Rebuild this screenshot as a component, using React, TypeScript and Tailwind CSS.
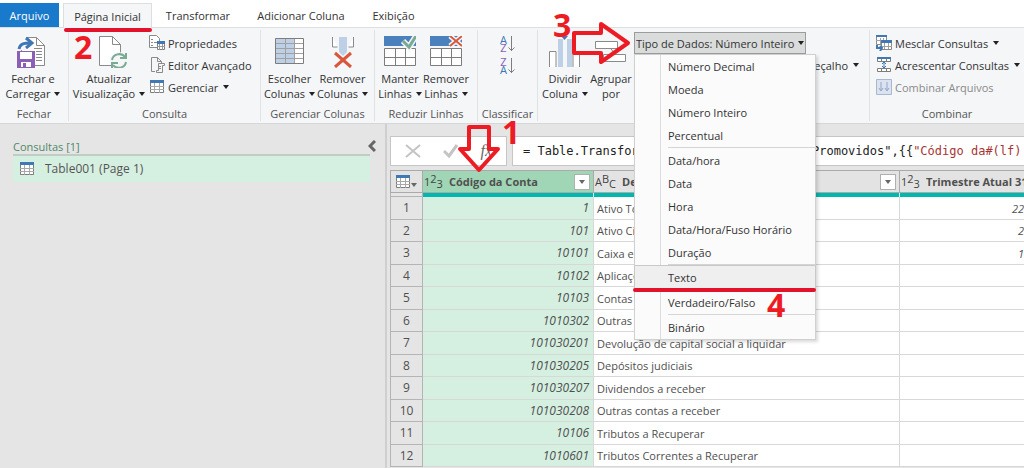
import type { ReactNode } from 'react'

function Caret({ className = 'fill-[#222]' }: { className?: string }) {
  return (
    <svg width="6" height="4" viewBox="0 0 6 4" className={`shrink-0 ${className}`} aria-hidden="true">
      <path d="M0 0h6L3 4z" />
    </svg>
  )
}

/* Icons */

function CloseLoadIcon() {
  return (
    <svg width="32" height="32" viewBox="0 0 32 32" fill="none" aria-hidden="true">
      <path d="M4.5 1.5h15l8 8v20h-23z" fill="#fff" stroke="#8a8a8a" />
      <path d="M19.5 1.5v8h8M17 12.5h8M19 15.5h6M19 18.5h6M19 21.5h6M19 24.500h6" stroke="#8a8a8a" />
      <path d="M0 0h9v14H0z" fill="#f4f6f8" />
      <path d="M2 13c1-5 4-6 12-6" stroke="#fff" strokeWidth="6" />
      <path d="M2 13c1-5 4-6 12-6" stroke="#3f78b5" strokeWidth="3" />
      <path d="M9 2l6 5-6 5" stroke="#3f78b5" strokeWidth="3" />
      <path d="M0 15h18v17H0z" fill="#8a5fb5" />
      <path d="M3 16h12v7H3z" fill="#fff" />
      <path d="M4 26h10v5H4z" fill="#fff" />
      <path d="M6 27h3v4H6z" fill="#8a5fb5" />
    </svg>
  )
}

function RefreshIcon() {
  return (
    <svg width="36" height="32" viewBox="0 0 36 32" fill="none" aria-hidden="true">
      <path d="M8.5.5h13l8 8v21h-21z" fill="#fff" stroke="#8a8a8a" />
      <path d="M21.5.5v8h8" stroke="#8a8a8a" />
      <circle cx="28" cy="25" r="9" fill="#f4f6f8" />
      <path d="M21 24c1-6 9-8 13-3M35 26c-1 6-9 8-13 3" stroke="#7aaa92" strokeWidth="2" />
      <path d="M35 17v5h-6M21 32v-5h6" stroke="#7aaa92" strokeWidth="2" />
    </svg>
  )
}

function ChooseColumnsIcon() {
  return (
    <svg width="32" height="32" viewBox="0 0 32 32" fill="none" aria-hidden="true">
      <path d="M2 2h28v26H2z" fill="#fff" />
      <path d="M2 2h19v26H2z" fill="#bdd0e6" />
      <path d="M2 7.5h28M2 12.5h28M2 17.5h28M2 22.5h28M11.5 2v26M20.5 2v26" stroke="#a0a0a0" />
      <path d="M1.5 2.5h28v25h-28z" stroke="#7d7d7d" />
    </svg>
  )
}

function RemoveColumnsIcon() {
  return (
    <svg width="32" height="32" viewBox="0 0 32 32" fill="none" aria-hidden="true">
      <path d="M5.5 1v10h5M26.5 1v10h-5" fill="#fff" stroke="#8a8a8a" />
      <path d="M12 1h8v15l-4 4-4-4z" fill="#bdd0e6" />
      <path d="M8 17l16 14M24 17L8 31" stroke="#d9573b" strokeWidth="3" />
    </svg>
  )
}

function RowsIcon({ children }: { children: ReactNode }) {
  return (
    <svg width="32" height="32" viewBox="0 0 32 32" fill="none" aria-hidden="true">
      <path d="M0 0h32v10H0z" fill="#4a80bb" />
      <path d="M.5 12.5h31v17H.5z" fill="#fff" stroke="#7d7d7d" />
      <path d="M11.5 12.5v17M21.5 12.5v17M.5 21.5h31" stroke="#7d7d7d" />
      {children}
    </svg>
  )
}

function KeepRowsIcon() {
  return (
    <RowsIcon>
      <path d="M19 5l6 6L32 0" stroke="#f4f6f8" strokeWidth="6" />
      <path d="M19 5l6 6L32 0" stroke="#7aaa92" strokeWidth="3" />
    </RowsIcon>
  )
}

function RemoveRowsIcon() {
  return (
    <RowsIcon>
      <path d="M20 0l12 10M32 0L20 10" stroke="#f4f6f8" strokeWidth="5" />
      <path d="M20 0l12 10M32 0L20 10" stroke="#d9573b" strokeWidth="2" />
    </RowsIcon>
  )
}

function SplitColumnIcon() {
  return (
    <svg width="32" height="32" viewBox="0 0 32 32" fill="none" aria-hidden="true">
      <path d="M.5 31V15.5H7V31M24 31V15.5h6.5V31" fill="#fff" stroke="#8a8a8a" />
      <path d="M9 3h5v28H9zM18 3h5v28h-5z" fill="#bdd0e6" />
      <path d="M12 0h7l-3.5 4z" fill="#3f78b5" />
    </svg>
  )
}

function GroupByIcon() {
  return (
    <svg width="32" height="32" viewBox="0 0 32 32" fill="none" aria-hidden="true">
      <path d="M.5 5.500h22v7H.5zM8.5 18.5h22v7h-22z" fill="#fff" stroke="#8a8a8a" />
      <path d="M16 13l4 5" stroke="#8a8a8a" />
    </svg>
  )
}

function SortIcon({ first, second }: { first: string; second: string }) {
  return (
    <span className="flex items-center">
      <span className="flex flex-col text-[11px] leading-[8px]">
        <span className={first === 'A' ? 'text-[#3f78b5]' : 'text-[#8a5fb5]'}>{first}</span>
        <span className={second === 'A' ? 'text-[#3f78b5]' : 'text-[#8a5fb5]'}>{second}</span>
      </span>
      <svg width="8" height="16" viewBox="0 0 8 16" fill="none" stroke="#7d7d7d" aria-hidden="true">
        <path d="M4.5 0v15M1.5 11.5l3 3 3-3" />
      </svg>
    </span>
  )
}

function PropertiesIcon() {
  return (
    <svg width="16" height="16" viewBox="0 0 16 16" fill="none" aria-hidden="true">
      <path d="M.5.5h7l3 3v9H.5z" fill="#fff" stroke="#8a8a8a" />
      <path d="M2 4.5h2M2 7.5h2M2 10.5h2M5 7.5h3" stroke="#8a8a8a" />
      <path d="M8.5 7.5h7v7h-7z" fill="#fff" stroke="#7d7d7d" />
      <path d="M8 6h8v3H8z" fill="#3f78b5" />
      <path d="M10.5 9v6M13.5 9v6M8 11.5h8" stroke="#9a9a9a" />
    </svg>
  )
}

function EditorIcon() {
  return (
    <svg width="16" height="16" viewBox="0 0 16 16" fill="none" aria-hidden="true">
      <path d="M6 14.5H2.5V.5h6l4 4V7" stroke="#8a8a8a" />
      <path d="M8.5.5v4h4" stroke="#8a8a8a" />
      <path d="M15.500 8.5v-2h-6v7h-2v2h6v-7h2M10 9.5h2M10 11.5h2" stroke="#8a8a8a" />
    </svg>
  )
}

function TableIcon() {
  return (
    <svg width="16" height="14" viewBox="0 0 16 14" fill="none" className="shrink-0" aria-hidden="true">
      <path d="M1.5 1.5h13v11h-13z" fill="#fff" stroke="#7d7d7d" />
      <path d="M5.5 3v10M10.5 3v10M1 6.5h14M1 9.5h14" stroke="#a8a8a8" />
      <path d="M1 0h14v3H1z" fill="#3f78b5" />
    </svg>
  )
}

function MergeIcon() {
  return (
    <svg width="16" height="16" viewBox="0 0 16 16" fill="none" aria-hidden="true">
      <path d="M.5 1.5h10v8H.5z" fill="#fff" stroke="#8a8a8a" />
      <path d="M4.5 3v6M7.5 3v6M0 5.5h11" stroke="#a0a0a0" />
      <path d="M0 0h11v2H0z" fill="#3f78b5" />
      <path d="M5.5 6.5h10v8h-10z" fill="#fff" stroke="#8a8a8a" />
      <path d="M8.5 8v6M12.5 8v6M5 11.5h11" stroke="#a0a0a0" />
      <path d="M5 5h11v3H5z" fill="#3f78b5" />
      <path d="M1 10v3h5M4 11l2 2-2 3" stroke="#3f78b5" strokeWidth="2" />
    </svg>
  )
}

function AppendIcon() {
  return (
    <svg width="16" height="16" viewBox="0 0 16 16" fill="none" aria-hidden="true">
      <path d="M1.5 1.5h13v3h-13zM1.5 11.5h13v3h-13z" fill="#fff" stroke="#7d7d7d" />
      <path d="M5.5 1v3M10.5 1v3M5.5 12v3M10.5 12v3" stroke="#7d7d7d" />
      <path d="M1 0h14v2H1z" fill="#3f78b5" />
      <path d="M8 5v6M6 7l2-2 2 2M6 9l2 2 2-2" stroke="#3f78b5" />
    </svg>
  )
}

function CombineFilesIcon() {
  return (
    <svg width="16" height="16" viewBox="0 0 16 16" fill="none" aria-hidden="true">
      <path d="M.5.5h15v15H.5z" fill="#dbe3f0" stroke="#a9b8d0" />
      <path d="M5 3v8M3 9l2 3 2-3M11 3v8M9 9l2 3 2-3" stroke="#93a5c4" />
    </svg>
  )
}

/* Ribbon */

interface BigButtonProps {
  icon: ReactNode
  lines: [string, string]
  menu?: boolean
  className: string
}

function BigButton({ icon, lines, menu = true, className }: BigButtonProps) {
  return (
    <button type="button" className={`flex flex-col items-center whitespace-nowrap pt-2 ${className}`}>
      {icon}
      <span className="mt-1 leading-[14px]">{lines[0]}</span>
      <span className="flex items-center gap-1 leading-[15px]">
        {lines[1]}
        {menu && <Caret />}
      </span>
    </button>
  )
}

interface SmallButtonProps {
  icon?: ReactNode
  label: string
  menu?: boolean
  disabled?: boolean
}

function SmallButton({ icon, label, menu, disabled }: SmallButtonProps) {
  return (
    <button
      type="button"
      disabled={disabled}
      className="flex h-[22px] items-center gap-[3px] whitespace-nowrap disabled:text-[#8a8a8a]"
    >
      {icon}
      {label}
      {menu && <Caret className="ml-0.5 fill-[#222]" />}
    </button>
  )
}

interface GroupProps {
  label?: string
  className: string
  children: ReactNode
}

function Group({ label, className, children }: GroupProps) {
  return (
    <section className={`flex shrink-0 flex-col ${className}`}>
      <div className="flex h-[78px] items-start">{children}</div>
      {label && <div className="text-center leading-[18px] text-[#555]">{label}</div>}
    </section>
  )
}

function Divider() {
  return <div className="my-0.5 w-px shrink-0 bg-[#e0e2e4]" />
}

const typeGroups = [
  ['Número Decimal', 'Moeda', 'Número Inteiro', 'Percentual'],
  ['Data/hora', 'Data', 'Hora', 'Data/Hora/Fuso Horário', 'Duração'],
  ['Texto'],
  ['Verdadeiro/Falso'],
  ['Binário'],
]

function TypeMenu() {
  return (
    <div
      role="menu"
      className="absolute left-0 top-full z-10 w-[182px] border border-[#d0d0d0] bg-[#fbfbfb] shadow-[2px_2px_3px_rgba(0,0,0,0.15)]"
    >
      <div className="absolute inset-y-0 left-[25px] w-px bg-[#dcdcdc]" />
      {typeGroups.map((items, i) => (
        <div key={items[0]} role="group" className="relative">
          {i > 0 && <div className="ml-[33px] h-0.5 border-t border-[#d5d5d5]" />}
          {items.map(item => (
            <button
              key={item}
              type="button"
              role="menuitem"
              className={[
                'block h-[23px] w-full pl-[33px] text-left text-[#333]',
                item === 'Texto' ? 'bg-[#efefef] outline outline-[#c8c8c8]' : '',
              ].join(' ')}
            >
              {item}
            </button>
          ))}
        </div>
      ))}
    </div>
  )
}

function Ribbon() {
  return (
    <div className="flex h-24 border-b border-[#d6d6d6] bg-[#f4f6f8]">
      <Group label="Fechar" className="w-[68px]">
        <BigButton icon={<CloseLoadIcon />} lines={['Fechar e', 'Carregar']} className="w-[66px]" />
      </Group>
      <Divider />
      <Group label="Consulta" className="w-[191px]">
        <BigButton icon={<RefreshIcon />} lines={['Atualizar', 'Visualização']} className="w-20" />
        <div className="pt-1">
          <SmallButton icon={<PropertiesIcon />} label="Propriedades" />
          <SmallButton icon={<EditorIcon />} label="Editor Avançado" />
          <SmallButton icon={<TableIcon />} label="Gerenciar" menu />
        </div>
      </Group>
      <Divider />
      <Group label="Gerenciar Colunas" className="w-[113px]">
        <BigButton icon={<ChooseColumnsIcon />} lines={['Escolher', 'Colunas']} className="ml-0.5 w-[53px]" />
        <BigButton icon={<RemoveColumnsIcon />} lines={['Remover', 'Colunas']} className="w-[53px]" />
      </Group>
      <Divider />
      <Group label="Reduzir Linhas" className="w-[102px]">
        <BigButton icon={<KeepRowsIcon />} lines={['Manter', 'Linhas']} className="ml-0.5 w-[46px]" />
        <BigButton icon={<RemoveRowsIcon />} lines={['Remover', 'Linhas']} className="w-[46px]" />
      </Group>
      <Divider />
      <Group label="Classificar" className="w-[59px]">
        <div className="flex w-full flex-col items-center gap-1.5 pt-2">
          <button type="button" aria-label="Classificar em ordem crescente">
            <SortIcon first="A" second="Z" />
          </button>
          <button type="button" aria-label="Classificar em ordem decrescente">
            <SortIcon first="Z" second="A" />
          </button>
        </div>
      </Group>
      <Divider />
      <Group className="w-[331px]">
        <BigButton icon={<SplitColumnIcon />} lines={['Dividir', 'Coluna']} className="ml-1 w-[46px]" />
        <BigButton icon={<GroupByIcon />} lines={['Agrupar', 'por']} menu={false} className="w-[46px]" />
        <div className="flex flex-col pt-1">
          <div className="relative">
            <button
              type="button"
              aria-haspopup="menu"
              aria-expanded="true"
              className="flex h-[22px] w-[172px] items-center justify-between whitespace-nowrap border border-[#9c9c9c] bg-[#d9dcdb] px-px"
            >
              Tipo de Dados: Número Inteiro
              <Caret />
            </button>
            <TypeMenu />
          </div>
          <div className="flex w-[225px] justify-end">
            <SmallButton label="Usar Cabeçalho" menu />
          </div>
        </div>
      </Group>
      <Divider />
      <Group label="Combinar" className="flex-1">
        <div className="pl-1.5 pt-1">
          <SmallButton icon={<MergeIcon />} label="Mesclar Consultas" menu />
          <SmallButton icon={<AppendIcon />} label="Acrescentar Consultas" menu />
          <SmallButton icon={<CombineFilesIcon />} label="Combinar Arquivos" disabled />
        </div>
      </Group>
    </div>
  )
}

function TabBar() {
  return (
    <nav className="flex h-7 whitespace-nowrap border-b border-[#dcdfe2] bg-white pt-[3px]">
      <button type="button" className="w-[59px] bg-[#1979ca] text-white">Arquivo</button>
      <button type="button" className="-mb-px ml-1 w-[89px] border-x border-t border-[#dcdfe2] bg-[#f4f6f8]">
        Página Inicial
      </button>
      <button type="button" className="w-[92px]">Transformar</button>
      <button type="button" className="w-[114px]">Adicionar Coluna</button>
      <button type="button" className="w-[71px]">Exibição</button>
    </nav>
  )
}

/* Queries and data */

function QueriesPane() {
  return (
    <aside className="w-[387px] shrink-0 border-r-2 border-[#cfcfcf] pl-[13px] pr-[15px] pt-3.5">
      <div className="flex h-4 items-center justify-between">
        <h2 className="text-[#4f8a68]">Consultas [1]</h2>
        <button type="button" aria-label="Recolher painel" className="-mr-1.5">
          <svg width="8" height="12" viewBox="0 0 8 12" fill="none" stroke="#666" strokeWidth="3" aria-hidden="true">
            <path d="M7 1L2 6l5 5" />
          </svg>
        </button>
      </div>
      <button
        type="button"
        className="flex h-[28px] w-full items-center gap-2.5 border-t-2 border-[#c2ccc6] bg-[#d5efe1] pl-1.5 text-xs text-[#555]"
      >
        <TableIcon />
        Table001 (Page 1)
      </button>
    </aside>
  )
}

function FormulaBar() {
  return (
    <div className="flex h-[30px] gap-[5px]">
      <div className="flex w-[117px] items-center justify-between border border-[#c6c6c6] bg-white px-3.5">
        <button type="button" aria-label="Cancelar">
          <svg width="16" height="14" viewBox="0 0 16 14" stroke="#c4c4c4" strokeWidth="2" aria-hidden="true">
            <path d="M1 1l14 12M15 1L1 13" />
          </svg>
        </button>
        <button type="button" aria-label="Confirmar">
          <svg width="16" height="14" viewBox="0 0 16 14" fill="none" stroke="#c4c4c4" strokeWidth="3" aria-hidden="true">
            <path d="M1 7l5 5L14 1" />
          </svg>
        </button>
        <button type="button" className="font-['Liberation_Serif',serif] text-base italic text-[#666]">fx</button>
      </div>
      <div
        role="textbox"
        aria-label="Fórmula"
        className="flex-1 overflow-hidden whitespace-pre border border-r-0 border-[#c6c6c6] bg-white pl-2.5 font-['DejaVu_Sans_Mono',monospace] text-xs leading-[28px] text-[#222]"
      >
        {'= Table.TransformColumnTypes(#"Registro Promovidos",{{'}
        <span className="text-[#a93434]">"Código da#(lf)</span>
      </div>
    </div>
  )
}

const rows = [
  ['1', 'Ativo Total', '22'],
  ['101', 'Ativo Circulante', '2'],
  ['10101', 'Caixa e Equivalentes', '1'],
  ['10102', 'Aplicações Financeiras', ''],
  ['10103', 'Contas a Receber', ''],
  ['1010302', 'Outras Contas', ''],
  ['101030201', 'Devolução de capital social a liquidar', ''],
  ['101030205', 'Depósitos judiciais', ''],
  ['101030207', 'Dividendos a receber', ''],
  ['101030208', 'Outras contas a receber', ''],
  ['10106', 'Tributos a Recuperar', ''],
  ['1010601', 'Tributos Correntes a Recuperar', ''],
]

/* Column type mark: three small characters, the second raised and the third lowered */
function TypeMark({ chars }: { chars: string }) {
  return (
    <span className="flex h-[17px] shrink-0 items-center text-[11px] leading-3 font-normal text-[#444]">
      <span>{chars[0]}</span>
      <span className="self-start">{chars[1]}</span>
      <span className="self-end">{chars[2]}</span>
    </span>
  )
}

function HeaderCell({ type, title, filter = true }: { type: string; title: string; filter?: boolean }) {
  return (
    <div className="flex h-[21px] items-center gap-1.5 whitespace-nowrap pl-px">
      <TypeMark chars={type} />
      <span className="flex-1">{title}</span>
      {filter && (
        <button
          type="button"
          aria-label={`Filtrar ${title}`}
          className="mr-[3px] flex size-4 shrink-0 items-center justify-center border border-[#b0b0b0] bg-white"
        >
          <Caret className="fill-[#666]" />
        </button>
      )}
    </div>
  )
}

function DataGrid() {
  return (
    <table className="mt-1 w-full table-fixed border-separate border-spacing-0 text-[#505050] [&_td]:p-0 [&_th]:p-0">
      <colgroup>
        <col className="w-[33px]" />
        <col className="w-[171px]" />
        <col className="w-[306px]" />
        <col />
      </colgroup>
      <thead className="text-left font-semibold">
        <tr className="[&>th]:border-y [&>th]:border-r [&>th]:border-[#aaa] [&>th]:bg-[#e3e3e3] [&>th:last-child]:border-r-0">
          <th scope="col" className="border-l">
            <button type="button" aria-label="Opções da tabela" className="flex h-[21px] w-full items-center pl-1">
              <TableIcon />
              <Caret className="mt-1.5 fill-[#666]" />
            </button>
          </th>
          <th scope="col" className="bg-[#a0d5b5]!">
            <HeaderCell type="123" title="Código da Conta" />
          </th>
          <th scope="col">
            <HeaderCell type="ABC" title="Descrição da Conta" />
          </th>
          <th scope="col">
            <HeaderCell type="123" title="Trimestre Atual 31" filter={false} />
          </th>
        </tr>
        <tr className="[&>td]:h-1 [&>td]:border-r [&>td]:border-[#cfe] [&>td]:bg-[#00b8ad] [&>td:last-child]:border-r-0">
          <td className="border-x border-b border-[#b4b4b4]! bg-[#e5e5e5]!" />
          <td />
          <td />
          <td />
        </tr>
      </thead>
      <tbody className="[&_td]:border-b [&_td]:border-r [&_td]:border-[#d8d8d8] [&_td]:bg-white [&_td:last-child]:border-r-0">
        {rows.map(([code, description, value], i) => (
          <tr key={code} className="h-[23px] whitespace-nowrap even:h-[22px]">
            <th scope="row" className="border-x border-b border-[#b4b4b4] bg-[#e5e5e5] text-xs leading-4 font-normal">
              {i + 1}
            </th>
            <td className="bg-[#d5efe1]! pr-1! text-right text-xs italic">{code}</td>
            <td className="pl-[3px]!">{description}</td>
            <td className="text-right italic">{value}</td>
          </tr>
        ))}
      </tbody>
    </table>
  )
}

/* Step markers drawn over the window */

function Steps() {
  return (
    <div className="pointer-events-none absolute inset-0 z-20 text-[32px] leading-8 font-bold text-[#ed1c24]">
      <div className="absolute left-16 top-7 h-1 w-[88px] rounded-full bg-[#e3122b]" />
      <div className="absolute left-[633px] top-[288px] h-1 w-[183px] rounded-full bg-[#e3122b]" />
      <svg
        width="60"
        height="44"
        viewBox="0 0 60 44"
        className="absolute left-[572px] top-[21px] fill-none stroke-[#ed1c24]"
        strokeWidth="4"
        strokeLinejoin="round"
        aria-hidden="true"
      >
        <path d="M2 12h27V3l27 19-27 19v-9H2z" />
      </svg>
      <svg
        width="44"
        height="48"
        viewBox="0 0 44 48"
        className="absolute left-[457px] top-[125px] fill-none stroke-[#ed1c24]"
        strokeWidth="4"
        strokeLinejoin="round"
        aria-hidden="true"
      >
        <path d="M12 2h20v22h9L22 45 3 24h9z" />
      </svg>
      <span className="absolute left-[502px] top-[116px]">1</span>
      <span className="absolute left-[74px] top-[31px]">2</span>
      <span className="absolute left-[553px] top-[9px]">3</span>
      <span className="absolute left-[767px] top-[289px]">4</span>
    </div>
  )
}

export default function App() {
  return (
    <div className="relative flex min-h-screen flex-col overflow-hidden bg-[#e5e5e5] font-['Open_Sans',sans-serif] text-[11px] leading-[15px] text-[#333]">
      <TabBar />
      <Ribbon />
      <div className="flex flex-1">
        <QueriesPane />
        <main className="min-w-0 flex-1 pl-[3px] pt-3">
          <FormulaBar />
          <DataGrid />
        </main>
      </div>
      <Steps />
    </div>
  )
}
